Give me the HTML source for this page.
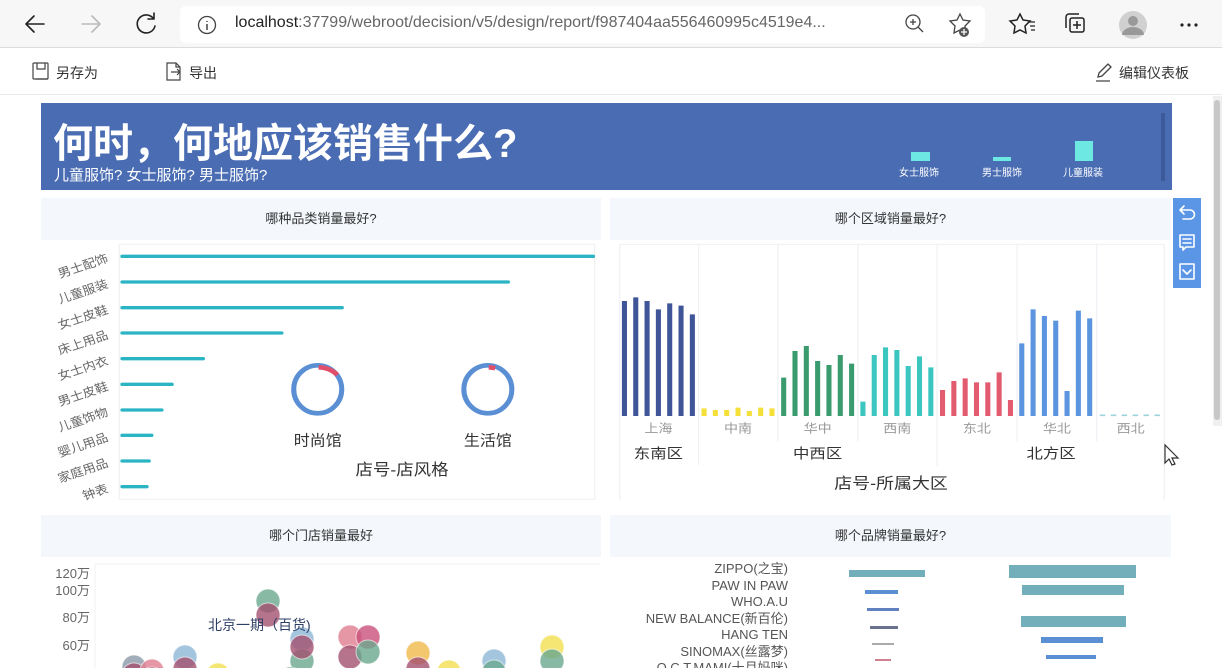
<!DOCTYPE html>
<html><head><meta charset="utf-8"><style>
*{margin:0;padding:0;box-sizing:border-box}
body{width:1222px;height:668px;overflow:hidden;background:#fff;font-family:"Liberation Sans","Noto Sans CJK SC",sans-serif;position:relative;color:#333}
.abs{position:absolute}
.chrome{left:0;top:0;width:1222px;height:48px;background:#f7f7f7;border-bottom:1px solid #dcdcdc}
.url{left:180px;top:6px;width:805px;height:37px;background:#fff;border-radius:6px}
.tb{left:0;top:49px;width:1222px;height:46px;background:#fff;border-bottom:1px solid #e8e8e8;font-size:14px;color:#333}
.hdr{background:#f4f8fd;font-size:13px;color:#333;text-align:center}
</style></head><body>
<div class="abs chrome"></div>
<svg class="abs" style="left:0;top:0" width="1222" height="48">
<g fill="none" stroke="#222" stroke-width="1.6" stroke-linecap="round" stroke-linejoin="round">
<path d="M44 24H26M34 16l-8 8 8 8"/>
<path d="M82 24h18M92 16l8 8-8 8" stroke="#bbb"/>
<path d="M153 18a9 9 0 1 0 2 8M154 13v6h-6"/>
</g>
</svg>
<div class="abs url"></div>
<svg class="abs" style="left:195px;top:13px" width="24" height="24"><circle cx="12" cy="12" r="8.5" fill="none" stroke="#444" stroke-width="1.3"/><path d="M12 11v6M12 8v1" stroke="#444" stroke-width="1.5"/></svg>
<div class="abs" style="left:235px;top:14px;font-size:16px;color:#666;white-space:nowrap"><span style="color:#222">localhost</span>:37799/webroot/decision/v5/design/report/f987404aa556460995c4519e4...</div>
<svg class="abs" style="left:900px;top:10px" width="322" height="30">
<g fill="none" stroke="#444" stroke-width="1.3">
<circle cx="13" cy="12" r="7"/><path d="M18 17l5 5M13 9v6M10 12h6"/>
<path d="M60 4l3 6 7 1-5 5 1 7-6-3-6 3 1-7-5-5 7-1z"/>
<path d="M120 4l3 6 7 1-5 5 1 7-6-3-6 3 1-7-5-5 7-1z" stroke="#222" stroke-width="1.5"/>
<path d="M129 12h6M130 16h5M131 20h4" stroke="#222"/>
<rect x="170" y="8" width="14" height="14" rx="2" stroke="#222" stroke-width="1.5"/><path d="M166 18V7a3 3 0 0 1 3-3h10M177 11v8M173 15h8" stroke="#222" stroke-width="1.5"/>
</g>
<circle cx="64" cy="22" r="5" fill="#555"/><path d="M64 19v6M61 22h6" stroke="#fff" stroke-width="1.3"/>
<circle cx="233" cy="15" r="14" fill="#d0d0d0"/><circle cx="233" cy="11" r="5" fill="#999"/><path d="M222 25a11 8 0 0 1 22 0z" fill="#999"/>
<circle cx="282" cy="15" r="1.6" fill="#222"/><circle cx="289" cy="15" r="1.6" fill="#222"/><circle cx="296" cy="15" r="1.6" fill="#222"/>
</svg>
<div class="abs tb"></div>
<svg class="abs" style="left:30px;top:60px" width="200" height="24"><g fill="none" stroke="#444" stroke-width="1.2"><rect x="3" y="3" width="15" height="16" rx="1"/><path d="M7 3v6h8V3M6 19h12"/><path d="M137 3h9l4 4v13h-13zM146 3v4h4M141 12h9M147 9l3 3-3 3"/></g></svg>
<div class="abs" style="left:56px;top:63px;font-size:14px">另存为</div>
<div class="abs" style="left:189px;top:63px;font-size:14px">导出</div>
<svg class="abs" style="left:1093px;top:60px" width="22" height="24"><g fill="none" stroke="#444" stroke-width="1.3"><path d="M5 17l1-4 9-9 3 3-9 9zM3 21h14"/></g></svg>
<div class="abs" style="left:1119px;top:63px;font-size:14px">编辑仪表板</div>
<div class="abs" style="left:1213px;top:96px;width:9px;height:330px;background:#f0f0f0"><div style="margin:4px 1px;width:6px;height:320px;background:#c8c8c8;border-radius:3px"></div></div>

<!-- banner -->
<div class="abs" style="left:41px;top:103px;width:1131px;height:87px;background:#4a6cb3"></div>
<div class="abs" style="left:1161px;top:113px;width:4px;height:68px;background:#3c5a9a"></div>
<div class="abs" style="left:53px;top:111px;font-size:40px;font-weight:bold;color:#fff;letter-spacing:0px">何时，何地应该销售什么?</div>
<div class="abs" style="left:54px;top:164px;font-size:15px;color:#fff">儿童服饰? 女士服饰? 男士服饰?</div>
<div class="abs" style="left:911px;top:152px;width:19px;height:9px;background:#6ee8e3"></div>
<div class="abs" style="left:993px;top:157px;width:18px;height:4px;background:#6ee8e3"></div>
<div class="abs" style="left:1075px;top:141px;width:18px;height:20px;background:#6ee8e3"></div>
<div class="abs" style="left:899px;top:164px;font-size:10px;color:#fff">女士服饰</div>
<div class="abs" style="left:982px;top:164px;font-size:10px;color:#fff">男士服饰</div>
<div class="abs" style="left:1063px;top:164px;font-size:10px;color:#fff">儿童服装</div>

<!-- headers -->
<div class="abs hdr" style="left:41px;top:198px;width:560px;height:42px;line-height:42px">哪种品类销量最好?</div>
<div class="abs hdr" style="left:610px;top:198px;width:561px;height:42px;line-height:42px">哪个区域销量最好?</div>
<div class="abs hdr" style="left:41px;top:515px;width:560px;height:42px;line-height:42px">哪个门店销量最好</div>
<div class="abs hdr" style="left:610px;top:515px;width:561px;height:42px;line-height:42px">哪个品牌销量最好?</div>

<!-- left chart -->
<svg class="abs" style="left:40px;top:195px" width="570" height="310" viewBox="0 0 1568 930" preserveAspectRatio="none">
<rect x="218" y="148" width="1308" height="765" fill="none" stroke="#f0f0f0" stroke-width="3"/>
<g stroke="#2bb5c4" stroke-width="10" stroke-linecap="round">
<path d="M226 184H1522M226 261H1288M226 338H831M226 414H665M226 491H449M226 568H363M226 645H335M226 721H307M226 798H300M226 875H294"/>
</g>
<g font-size="36" fill="#666" text-anchor="end">
<text transform="translate(190 200) rotate(-20)">男士配饰</text>
<text transform="translate(190 277) rotate(-20)">儿童服装</text>
<text transform="translate(190 354) rotate(-20)">女士皮鞋</text>
<text transform="translate(190 430) rotate(-20)">床上用品</text>
<text transform="translate(190 507) rotate(-20)">女士内衣</text>
<text transform="translate(190 584) rotate(-20)">男士皮鞋</text>
<text transform="translate(190 661) rotate(-20)">儿童饰物</text>
<text transform="translate(190 737) rotate(-20)">婴儿用品</text>
<text transform="translate(190 814) rotate(-20)">家庭用品</text>
<text transform="translate(190 891) rotate(-20)">钟表</text>
</g>
<g fill="none" stroke-width="14">
<ellipse cx="764" cy="583" rx="66" ry="72" stroke="#5b8fd4"/>
<ellipse cx="764" cy="583" rx="66" ry="72" stroke="#e0506a" stroke-dasharray="58 500" transform="rotate(-88 764 583)"/>
<ellipse cx="1232" cy="583" rx="66" ry="72" stroke="#5b8fd4"/>
<ellipse cx="1232" cy="583" rx="66" ry="72" stroke="#e0506a" stroke-dasharray="18 500" transform="rotate(-88 1232 583)"/>
</g>
<g font-size="44" fill="#333" text-anchor="middle">
<text x="764" y="752">时尚馆</text><text x="1232" y="752">生活馆</text>
<text x="996" y="840" font-size="48">店号-店风格</text>
</g>
</svg>

<!-- right chart -->
<svg class="abs" style="left:610px;top:195px" width="612" height="310" viewBox="0 0 1568 930" preserveAspectRatio="none">
<g stroke="#eef0f4" stroke-width="3" fill="none">
<path d="M25 148V915M227 148V810M430 148V740M635 148V740M838 148V815M1043 148V740M1247 148V740M1420 148V915M25 148H1420"/>
</g>
<g stroke-width="13">
<g stroke="#3f5597"><path d="M37 663V318M66 663V307M95 663V318M124 663V343M153 663V325M182 663V332M211 663V358"/></g>
<g stroke="#f5e03a"><path d="M241 663V640M270 663V645M299 663V645M328 663V638M357 663V648M386 663V638M415 663V640"/></g>
<g stroke="#3a9b6e"><path d="M445 663V548M474 663V468M503 663V453M532 663V498M561 663V510M590 663V480M619 663V506"/></g>
<g stroke="#3cc6c0"><path d="M648 663V620M677 663V480M706 663V457M735 663V465M764 663V513M793 663V484M822 663V517"/></g>
<g stroke="#e35b6f"><path d="M852 663V585M881 663V558M910 663V550M939 663V562M968 663V562M997 663V532M1026 663V615"/></g>
<g stroke="#5b95e0"><path d="M1055 663V445M1084 663V343M1113 663V363M1142 663V377M1171 663V588M1200 663V347M1229 663V370"/></g>
<g stroke="#9cd3dc" stroke-width="5"><path d="M1255 661H1415" stroke-dasharray="14 14"/></g>
</g>
<g font-size="36" fill="#999" text-anchor="middle">
<text x="124" y="712">上海</text><text x="328" y="712">中南</text><text x="532" y="712">华中</text><text x="736" y="712">西南</text><text x="940" y="712">东北</text><text x="1145" y="712">华北</text><text x="1334" y="712">西北</text>
</g>
<g font-size="42" fill="#333" text-anchor="middle">
<text x="124" y="790">东南区</text><text x="532" y="790">中西区</text><text x="1130" y="790">北方区</text>
<text x="720" y="880" font-size="46">店号-所属大区</text>
</g>
</svg>
<!-- floating toolbar -->
<svg class="abs" style="left:1173px;top:198px" width="28" height="90">
<rect width="28" height="90" fill="#5b95e6"/>
<g fill="none" stroke="#fff" stroke-width="1.6" stroke-linejoin="round" stroke-linecap="round">
<path d="M11 8l-4 4 4 4M7 12h10a4.5 4.5 0 0 1 0 9h-7"/>
<path d="M7 37h14v12h-8l-3 3v-3H7zM10 41h8M10 45h8"/>
<rect x="7" y="66" width="14" height="15"/><path d="M10 72l4 4 4-4"/>
</g>
</svg>
<svg class="abs" style="left:1163px;top:443px" width="20" height="26"><path d="M2 2v18l4-4 3 6 3-1-3-6h6z" fill="#fff" stroke="#333" stroke-width="1.2"/></svg>

<!-- bubble chart -->
<svg class="abs" style="left:40px;top:557px" width="560" height="111">
<rect x="55" y="7" width="539" height="110" fill="none" stroke="#f0f0f0"/>
<g font-size="13" fill="#666" text-anchor="end">
<text x="50" y="21">120万</text><text x="50" y="38">100万</text><text x="50" y="65">80万</text><text x="50" y="93">60万</text>
</g>
<g fill-opacity=".8" stroke="#fff" stroke-opacity=".6">
<circle cx="94" cy="110" r="12" fill="#8a9aa8"/><circle cx="94" cy="118" r="12" fill="#a2506f"/>
<circle cx="112" cy="114" r="12" fill="#e07d8f"/><circle cx="112" cy="122" r="12" fill="#a2506f"/>
<circle cx="145" cy="100" r="12" fill="#8db6d6"/><circle cx="145" cy="112" r="12" fill="#a2506f"/>
<circle cx="178" cy="118" r="12" fill="#f3e050"/>
<circle cx="228" cy="44" r="12" fill="#6aa78e"/><circle cx="228" cy="58" r="12" fill="#a2506f"/>
<circle cx="262" cy="82" r="12" fill="#8db6d6"/><circle cx="262" cy="104" r="12" fill="#6aa78e"/><circle cx="262" cy="90" r="12" fill="#a2506f"/>
<circle cx="250" cy="122" r="12" fill="#6aa78e"/>
<circle cx="310" cy="80" r="12" fill="#e07d8f"/><circle cx="310" cy="100" r="12" fill="#a2506f"/>
<circle cx="328" cy="80" r="12" fill="#c9507a"/><circle cx="328" cy="95" r="12" fill="#6aa78e"/>
<circle cx="378" cy="96" r="12" fill="#f0b94a"/><circle cx="378" cy="112" r="12" fill="#a2506f"/>
<circle cx="409" cy="115" r="12" fill="#f3e050"/><circle cx="409" cy="124" r="12" fill="#a2506f"/>
<circle cx="454" cy="104" r="12" fill="#8db6d6"/><circle cx="454" cy="115" r="12" fill="#6aa78e"/>
<circle cx="512" cy="90" r="12" fill="#f3e050"/><circle cx="512" cy="104" r="12" fill="#6aa78e"/><circle cx="512" cy="124" r="12" fill="#a2506f"/>
</g>
<text x="168" y="73" font-size="14" fill="#2e3f66">北京一期（百货)</text>
</svg>

<!-- brand chart -->
<svg class="abs" style="left:610px;top:557px" width="561" height="111">
<g font-size="13" fill="#555" text-anchor="end">
<text x="178" y="16">ZIPPO(之宝)</text><text x="178" y="33">PAW IN PAW</text><text x="178" y="49">WHO.A.U</text><text x="178" y="66">NEW BALANCE(新百伦)</text><text x="178" y="82">HANG TEN</text><text x="178" y="99">SINOMAX(丝露梦)</text><text x="178" y="115">O.C.T.MAMI(十月妈咪)</text>
</g>
<rect x="239" y="13" width="76" height="7" fill="#72afbb"/>
<rect x="255" y="33" width="33" height="4" fill="#5b8fd4"/>
<rect x="257" y="51" width="32" height="3" fill="#6080c0"/>
<rect x="260" y="69" width="28" height="3" fill="#6a7290"/>
<rect x="262" y="86" width="22" height="2" fill="#aaa"/>
<rect x="265" y="102" width="16" height="2" fill="#d08090"/>
<rect x="399" y="8" width="127" height="13" fill="#72afbb"/>
<rect x="412" y="28" width="102" height="10" fill="#72afbb"/>
<rect x="411" y="59" width="105" height="11" fill="#72afbb"/>
<rect x="431" y="80" width="62" height="6" fill="#5b8fd4"/>
<rect x="436" y="98" width="50" height="4" fill="#5b8fd4"/>
</svg>
</body></html>
